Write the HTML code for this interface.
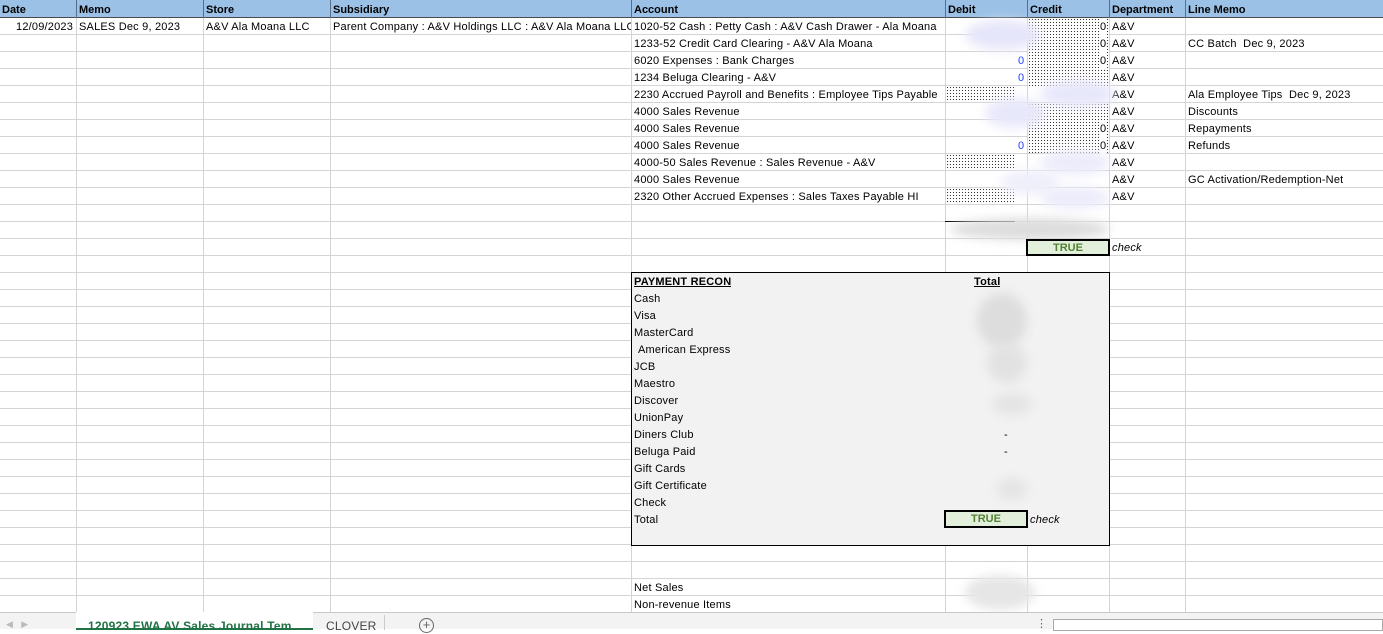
<!DOCTYPE html>
<html><head><meta charset="utf-8"><style>
*{margin:0;padding:0;box-sizing:border-box}
body{width:1383px;height:629px;overflow:hidden;background:#fff;font-family:"Liberation Sans",sans-serif;font-size:11px;color:#000;position:relative}
.grid{position:absolute;left:0;top:18px;width:1383px;height:594px;
background-image:repeating-linear-gradient(to bottom,transparent 0,transparent 16px,#d4d4d4 16px,#d4d4d4 17px);}
.v{position:absolute;top:0;width:1px;height:612px;background:#d4d4d4}
.hdr{position:absolute;left:0;top:0;width:1383px;height:18px;background:#9bc2e6;border-bottom:1px solid #4a4a4a}
.hdr div{position:absolute;top:4px;font-weight:bold;font-size:11px}
.hv{position:absolute;top:0;width:1px;height:18px;background:#5a6f86}
.t{position:absolute;white-space:nowrap;line-height:17px;height:17px;overflow:hidden;padding-top:1px;letter-spacing:0.2px}
.dots{position:absolute;background-image:radial-gradient(#333 0.6px,transparent 0.8px);background-size:3px 3px;background-color:#fff}
.blur{position:absolute;border-radius:50%;filter:blur(5px)}
.blue{color:#1f3fff}
.recon{position:absolute;left:631px;top:272px;width:479px;height:274px;background:#f2f2f2;border:1px solid #000}
.true{position:absolute;background:#e2efda;border:2px solid #000;color:#548235;font-weight:bold;text-align:center;line-height:15px}
.tabs{position:absolute;left:0;top:612px;width:1383px;height:17px;background:#f3f3f3;border-top:1px solid #c8c8c8}
</style></head><body>
<div class="grid"></div>
<div class="v" style="left:76px"></div><div class="v" style="left:203px"></div><div class="v" style="left:330px"></div><div class="v" style="left:631px"></div><div class="v" style="left:945px"></div><div class="v" style="left:1027px"></div><div class="v" style="left:1109px"></div><div class="v" style="left:1185px"></div>

<div class="hdr">
<div style="left:2px">Date</div><div style="left:79px">Memo</div><div style="left:206px">Store</div><div style="left:333px">Subsidiary</div><div style="left:634px">Account</div><div style="left:948px">Debit</div><div style="left:1030px">Credit</div><div style="left:1112px">Department</div><div style="left:1188px">Line Memo</div>
<span class="hv" style="left:76px"></span><span class="hv" style="left:203px"></span><span class="hv" style="left:330px"></span><span class="hv" style="left:631px"></span><span class="hv" style="left:945px"></span><span class="hv" style="left:1027px"></span><span class="hv" style="left:1109px"></span><span class="hv" style="left:1185px"></span>
</div>

<div class="t" style="left:16px;top:18px">12/09/2023</div>
<div class="t" style="left:79px;top:18px">SALES Dec 9, 2023</div>
<div class="t" style="left:206px;top:18px">A&amp;V Ala Moana LLC</div>
<div class="t" style="left:333px;top:18px;width:298px">Parent Company : A&amp;V Holdings LLC : A&amp;V Ala Moana LLC</div>

<div class="t" style="left:634px;top:18px;width:311px">1020-52 Cash : Petty Cash : A&amp;V Cash Drawer - Ala Moana</div>
<div class="t" style="left:634px;top:35px">1233-52 Credit Card Clearing - A&amp;V Ala Moana</div>
<div class="t" style="left:634px;top:52px">6020 Expenses : Bank Charges</div>
<div class="t" style="left:634px;top:69px">1234 Beluga Clearing - A&amp;V</div>
<div class="t" style="left:634px;top:86px;width:311px">2230 Accrued Payroll and Benefits : Employee Tips Payable</div>
<div class="t" style="left:634px;top:103px">4000 Sales Revenue</div>
<div class="t" style="left:634px;top:120px">4000 Sales Revenue</div>
<div class="t" style="left:634px;top:137px">4000 Sales Revenue</div>
<div class="t" style="left:634px;top:154px">4000-50 Sales Revenue : Sales Revenue - A&amp;V</div>
<div class="t" style="left:634px;top:171px">4000 Sales Revenue</div>
<div class="t" style="left:634px;top:188px">2320 Other Accrued Expenses : Sales Taxes Payable HI</div>

<div class="dots" style="left:1028px;top:18px;width:81px;height:68px"></div>
<div class="dots" style="left:1028px;top:103px;width:81px;height:50px"></div>
<div class="dots" style="left:946px;top:86px;width:70px;height:16px"></div>
<div class="dots" style="left:946px;top:154px;width:70px;height:16px"></div>
<div class="dots" style="left:946px;top:188px;width:70px;height:16px"></div>

<div class="t blue" style="left:1018px;top:52px">0</div>
<div class="t blue" style="left:1018px;top:69px">0</div>
<div class="t blue" style="left:1018px;top:137px">0</div>
<div class="t" style="left:1100px;top:18px;background:#fff">0</div>
<div class="t" style="left:1100px;top:35px;background:#fff">0</div>
<div class="t" style="left:1100px;top:52px;background:#fff">0</div>
<div class="t" style="left:1100px;top:120px;background:#fff">0</div>
<div class="t" style="left:1100px;top:137px;background:#fff">0</div>

<div class="t" style="left:1112px;top:18px">A&amp;V</div><div class="t" style="left:1112px;top:35px">A&amp;V</div><div class="t" style="left:1112px;top:52px">A&amp;V</div><div class="t" style="left:1112px;top:69px">A&amp;V</div><div class="t" style="left:1112px;top:86px">A&amp;V</div><div class="t" style="left:1112px;top:103px">A&amp;V</div><div class="t" style="left:1112px;top:120px">A&amp;V</div><div class="t" style="left:1112px;top:137px">A&amp;V</div><div class="t" style="left:1112px;top:154px">A&amp;V</div><div class="t" style="left:1112px;top:171px">A&amp;V</div><div class="t" style="left:1112px;top:188px">A&amp;V</div>

<div class="t" style="left:1188px;top:35px">CC Batch&nbsp; Dec 9, 2023</div>
<div class="t" style="left:1188px;top:86px">Ala Employee Tips&nbsp; Dec 9, 2023</div>
<div class="t" style="left:1188px;top:103px">Discounts</div>
<div class="t" style="left:1188px;top:120px">Repayments</div>
<div class="t" style="left:1188px;top:137px">Refunds</div>
<div class="t" style="left:1188px;top:171px">GC Activation/Redemption-Net</div>

<div class="blur" style="left:965px;top:20px;width:75px;height:30px;background:#e6e6fa"></div>
<div class="blur" style="left:1040px;top:80px;width:75px;height:28px;background:#e8e8fb"></div>
<div class="blur" style="left:985px;top:98px;width:60px;height:30px;background:#e8e8fb"></div>
<div class="blur" style="left:1040px;top:150px;width:70px;height:25px;background:#ececfb"></div>
<div class="blur" style="left:1000px;top:170px;width:60px;height:25px;background:#efeffb"></div>
<div class="blur" style="left:1040px;top:187px;width:70px;height:22px;background:#ececfb"></div>
<div style="position:absolute;left:945px;top:221px;width:70px;height:1px;background:#000"></div>
<div class="blur" style="left:950px;top:218px;width:160px;height:22px;background:#ddd"></div>

<div class="true" style="left:1026px;top:239px;width:84px;height:17px">TRUE</div>
<div class="t" style="left:1112px;top:239px;font-style:italic">check</div>

<div class="recon">
<div class="t" style="left:2px;top:0px;font-weight:bold;text-decoration:underline">PAYMENT RECON</div>
<div class="t" style="left:342px;top:0px;font-weight:bold;text-decoration:underline">Total</div>
<div class="t" style="left:2px;top:17px">Cash</div>
<div class="t" style="left:2px;top:34px">Visa</div>
<div class="t" style="left:2px;top:51px">MasterCard</div>
<div class="t" style="left:6px;top:68px">American Express</div>
<div class="t" style="left:2px;top:85px">JCB</div>
<div class="t" style="left:2px;top:102px">Maestro</div>
<div class="t" style="left:2px;top:119px">Discover</div>
<div class="t" style="left:2px;top:136px">UnionPay</div>
<div class="t" style="left:2px;top:153px">Diners Club</div>
<div class="t" style="left:2px;top:170px">Beluga Paid</div>
<div class="t" style="left:2px;top:187px">Gift Cards</div>
<div class="t" style="left:2px;top:204px">Gift Certificate</div>
<div class="t" style="left:2px;top:221px">Check</div>
<div class="t" style="left:2px;top:238px">Total</div>
<div class="t" style="left:372px;top:153px">-</div>
<div class="t" style="left:372px;top:170px">-</div>
<div class="blur" style="left:345px;top:20px;width:50px;height:55px;background:#ddd"></div>
<div class="blur" style="left:355px;top:70px;width:40px;height:40px;background:#e2e2e2"></div>
<div class="blur" style="left:360px;top:120px;width:40px;height:22px;background:#e4e4e4"></div>
<div class="blur" style="left:365px;top:205px;width:30px;height:22px;background:#e4e4e4"></div>
<div class="true" style="left:312px;top:237px;width:84px;height:18px">TRUE</div>
<div class="t" style="left:398px;top:238px;font-style:italic">check</div>
</div>

<div class="t" style="left:634px;top:579px">Net Sales</div>
<div class="t" style="left:634px;top:596px">Non-revenue Items</div>
<div class="blur" style="left:965px;top:575px;width:70px;height:35px;background:#e6e6e6"></div>

<div class="tabs">
<div class="t" style="left:6px;top:2px;color:#bbb;font-size:9px">&#9664;&nbsp;&nbsp;&nbsp;&#9654;</div>
<div style="position:absolute;left:76px;top:-1px;width:237px;height:18px;background:#fff;border-bottom:2px solid #217346"></div>
<div class="t" style="left:88px;top:4px;color:#217346;font-weight:bold;font-size:12px">120923 EWA AV Sales Journal Tem</div>
<div class="t" style="left:326px;top:4px;color:#444;font-size:12px">CLOVER</div>
<div style="position:absolute;left:384px;top:2px;width:1px;height:15px;background:#ccc"></div>
<div style="position:absolute;left:419px;top:5px;width:15px;height:15px;border:1px solid #666;border-radius:50%;text-align:center;line-height:12px;color:#666;font-size:13px">+</div>
<div class="t" style="left:1036px;top:2px;color:#666">&#8942;</div>
<div style="position:absolute;left:1053px;top:6px;width:330px;height:12px;background:#fff;border:1px solid #aaa"></div>
</div>
</body></html>
